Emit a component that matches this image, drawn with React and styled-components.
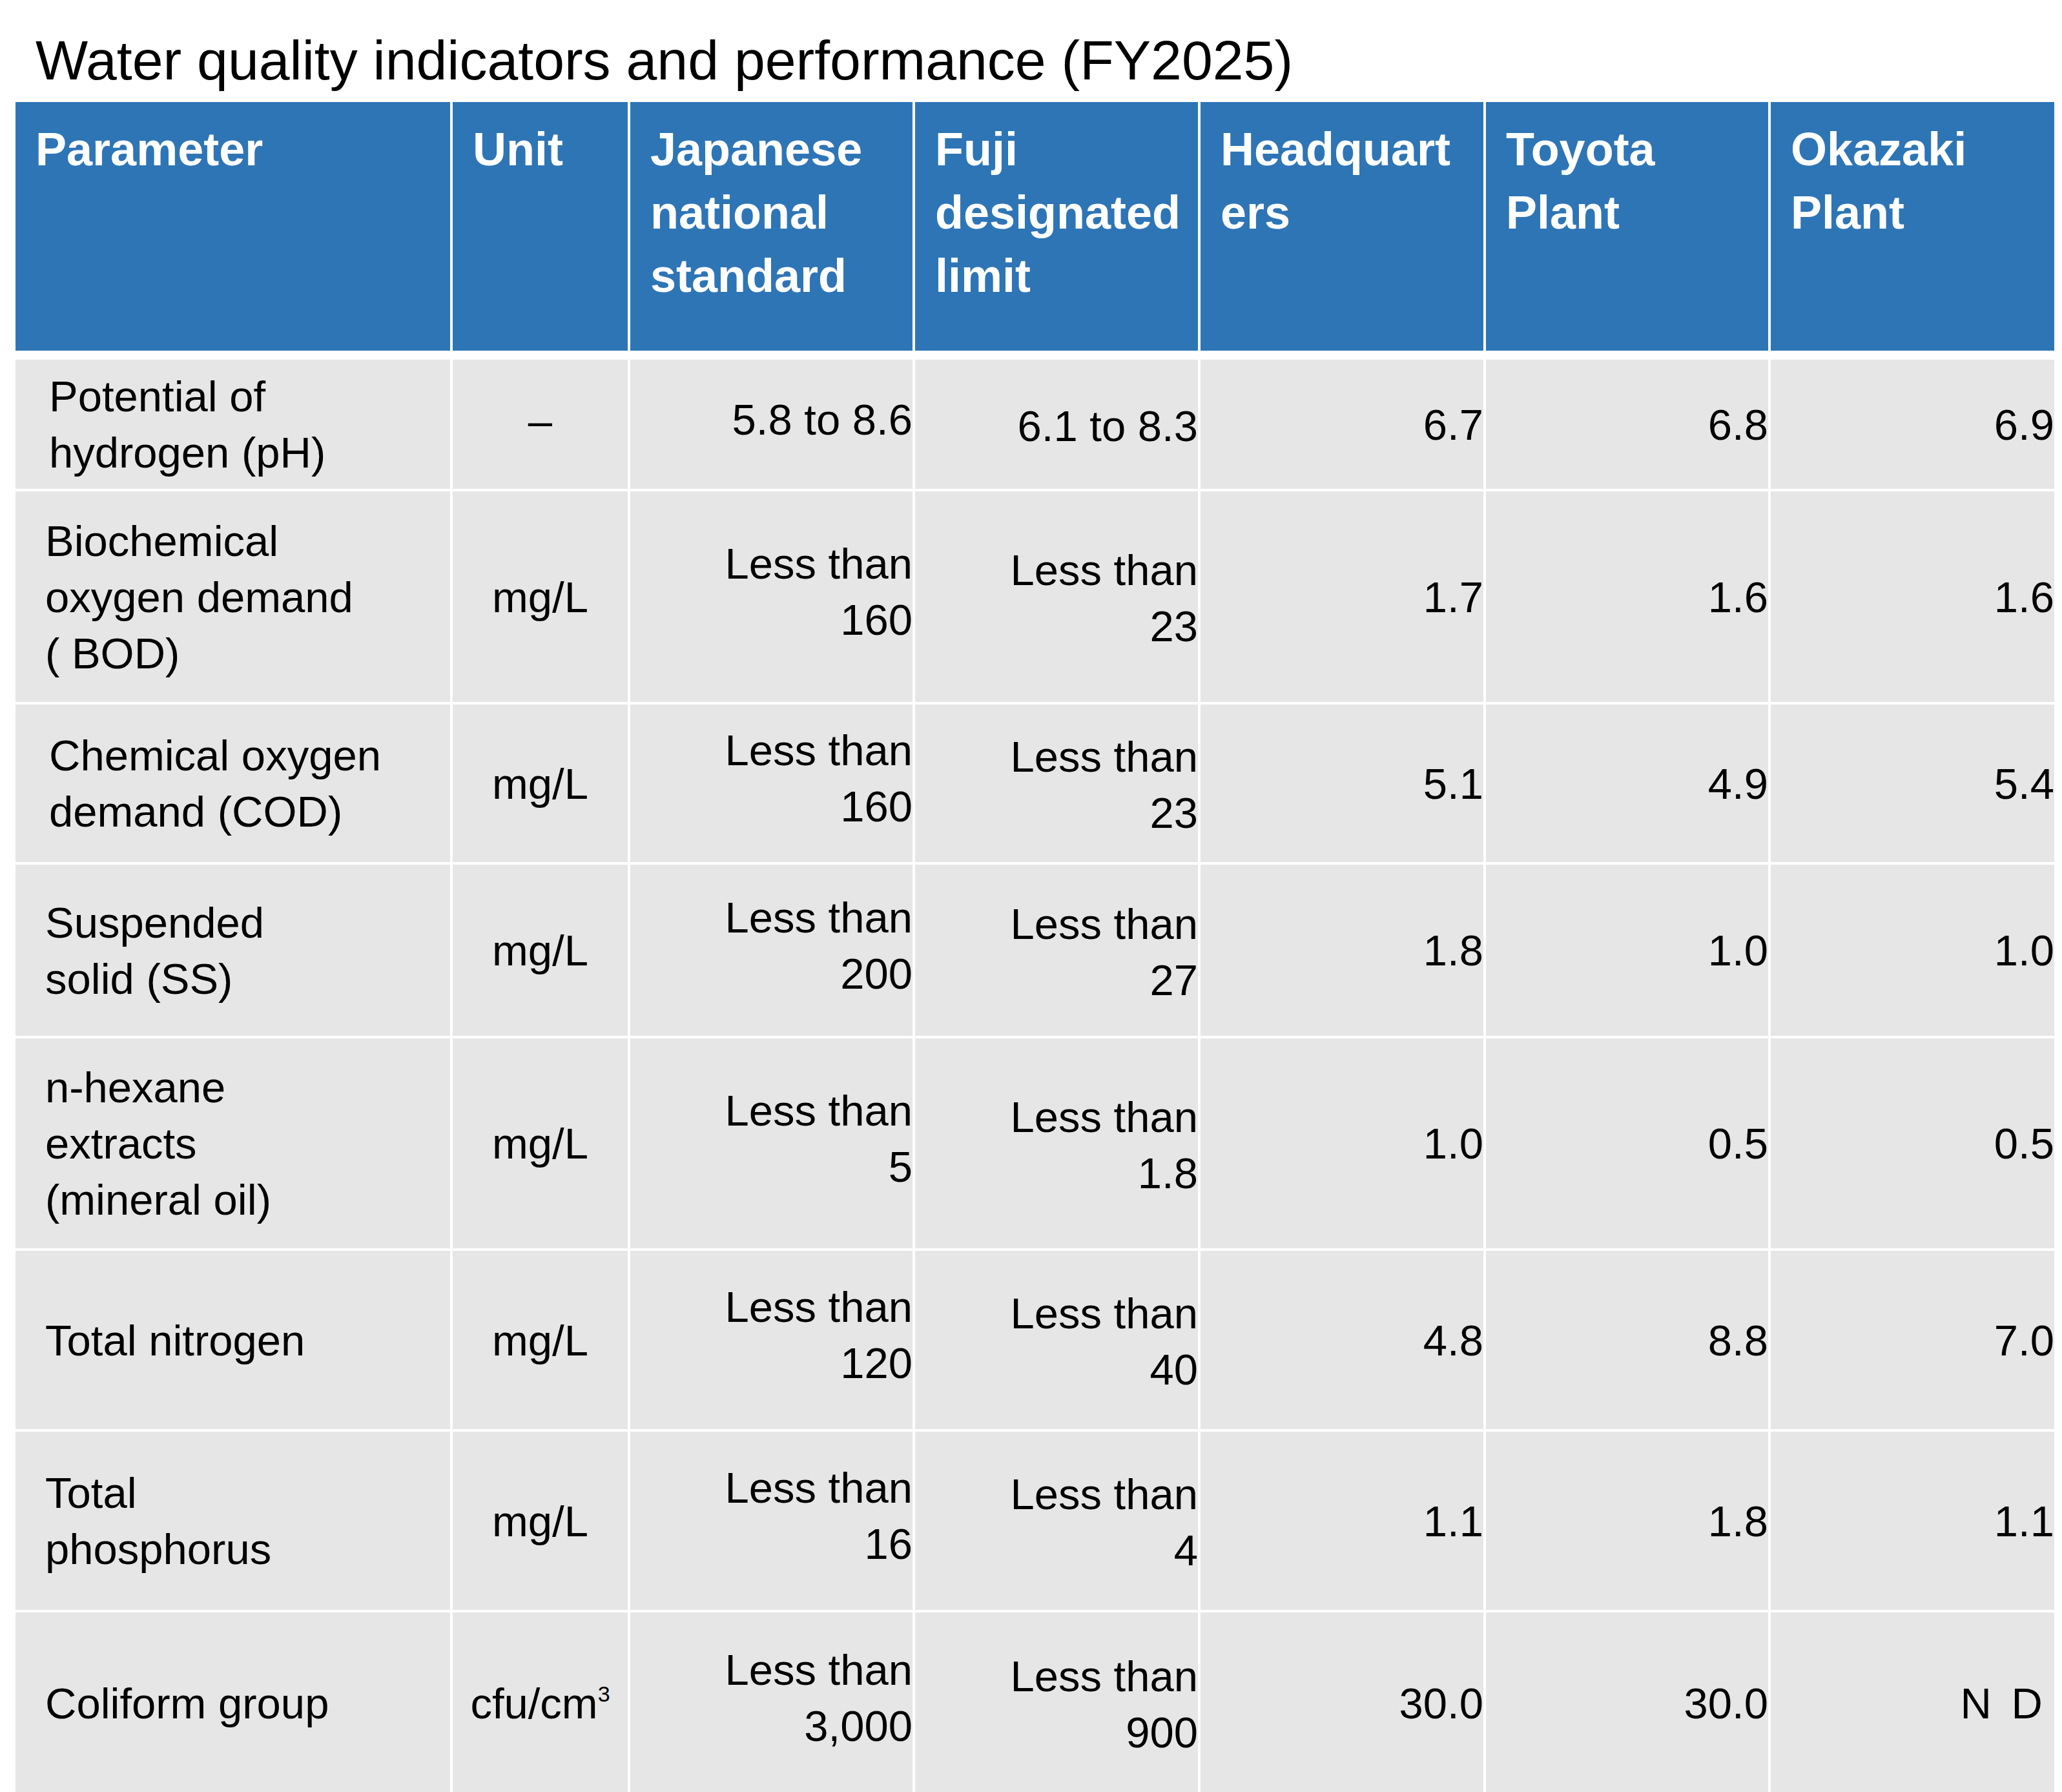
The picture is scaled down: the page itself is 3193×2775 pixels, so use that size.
import React from 'react';
import styled, { createGlobalStyle } from 'styled-components';

const GlobalStyle = createGlobalStyle`
  body {
    margin: 0;
    background: #ffffff;
    font-family: "Liberation Sans", Arial, sans-serif;
    color: #000000;
  }
`;

const COLS = '673px 271px 437px 438px 438px 437px 439px';

const Page = styled.div`
  padding-top: 50px;
`;

const Title = styled.h1`
  margin: 0 0 22px 55px;
  font-size: 86px;
  line-height: 86px;
  font-weight: 400;
  white-space: nowrap;
`;

const Table = styled.div`
  display: flex;
  flex-direction: column;
  gap: 4px;
  margin-left: 24px;
  width: 3157px;
`;

const Row = styled.div`
  display: grid;
  grid-template-columns: ${COLS};
  column-gap: 4px;
  height: ${p => p.$h}px;
`;

const HeadRow = styled(Row)`
  margin-bottom: 10px;
`;

const HeadCell = styled.div`
  background: #2e75b6;
  color: #ffffff;
  font-size: 72px;
  font-weight: 700;
  line-height: 98px;
  padding: 24px 0 0 31px;
  white-space: nowrap;
`;

const Cell = styled.div`
  background: #e6e6e6;
  display: flex;
  flex-direction: column;
  justify-content: center;
  font-size: 67px;
  line-height: 87px;
  white-space: pre;
  text-align: ${p => p.$align || 'right'};
  padding-left: ${p => p.$pl || 0}px;
  padding-right: ${p => p.$pr || 0}px;
  padding-bottom: ${p => p.$pb || 0}px;
  padding-top: ${p => p.$pt || 0}px;
  letter-spacing: ${p => p.$ls || 0}px;
`;

const Sup = styled.span`
  font-size: 34px;
  vertical-align: 26px;
  line-height: 0;
`;

const heads = [
  ['Parameter'],
  ['Unit'],
  ['Japanese', 'national', 'standard'],
  ['Fuji', 'designated', 'limit'],
  ['Headquart', 'ers'],
  ['Toyota', 'Plant'],
  ['Okazaki', 'Plant'],
];

const LT = n => ['Less than', n];

const rows = [
  { h: 200, indent: 6, param: ['Potential of', 'hydrogen (pH)'], unit: '–', jp: ['5.8 to 8.6'], fuji: ['6.1 to 8.3'], v: ['6.7', '6.8', '6.9'] },
  { h: 326, param: ['Biochemical', 'oxygen demand', '( BOD)'], unit: 'mg/L', jp: LT('160'), fuji: LT('23'), v: ['1.7', '1.6', '1.6'] },
  { h: 244, indent: 6, param: ['Chemical oxygen', 'demand (COD)'], unit: 'mg/L', jp: LT('160'), fuji: LT('23'), v: ['5.1', '4.9', '5.4'] },
  { h: 265, param: ['Suspended', 'solid (SS)'], unit: 'mg/L', jp: LT('200'), fuji: LT('27'), v: ['1.8', '1.0', '1.0'] },
  { h: 325, param: ['n-hexane', 'extracts', '(mineral oil)'], unit: 'mg/L', jp: LT('5'), fuji: LT('1.8'), v: ['1.0', '0.5', '0.5'] },
  { h: 276, param: ['Total nitrogen'], unit: 'mg/L', jp: LT('120'), fuji: LT('40'), v: ['4.8', '8.8', '7.0'] },
  { h: 276, param: ['Total', 'phosphorus'], unit: 'mg/L', jp: LT('16'), fuji: LT('4'), v: ['1.1', '1.8', '1.1'] },
  { h: 280, param: ['Coliform group'], unit: 'cfu/cm3', jp: LT('3,000'), fuji: LT('900'), v: ['30.0', '30.0', 'N D'] },
];

const Lines = ({ lines }) => lines.map((l, i) => <div key={i}>{l}</div>);

const Unit = ({ text }) =>
  text === 'cfu/cm3' ? <div>cfu/cm<Sup>3</Sup></div> : <div>{text}</div>;

export default function App() {
  return (
    <Page>
      <GlobalStyle />
      <Title>Water quality indicators and performance (FY2025)</Title>
      <Table>
        <HeadRow $h={385}>
          {heads.map((h, i) => (
            <HeadCell key={i}>
              <Lines lines={h} />
            </HeadCell>
          ))}
        </HeadRow>
        {rows.map((r, i) => (
          <Row key={i} $h={r.h}>
            <Cell $align="left" $pl={46 + (r.indent || 0)}>
              <Lines lines={r.param} />
            </Cell>
            <Cell $align="center" $pb={r.unit === '–' ? 12 : 0}>
              <Unit text={r.unit} />
            </Cell>
            <Cell $pb={16}>
              <Lines lines={r.jp} />
            </Cell>
            <Cell $pt={4}>
              <Lines lines={r.fuji} />
            </Cell>
            {r.v.map((v, j) =>
              v === 'N D' ? (
                <Cell key={j} $pr={12} $ls={6}>{v}</Cell>
              ) : (
                <Cell key={j}>{v}</Cell>
              )
            )}
          </Row>
        ))}
      </Table>
    </Page>
  );
}
